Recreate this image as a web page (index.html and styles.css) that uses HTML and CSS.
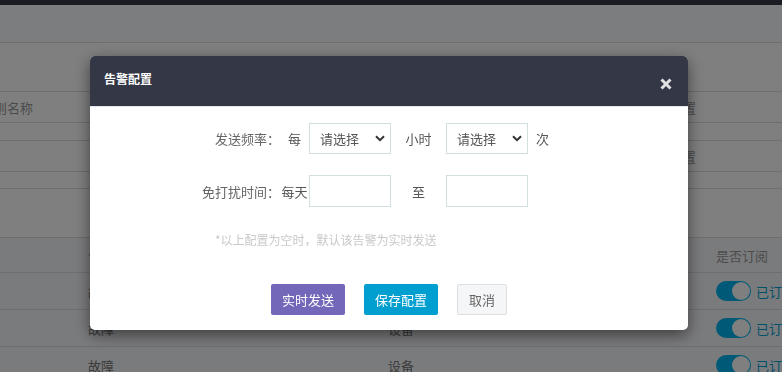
FILE: index.html
```html
<!DOCTYPE html>
<html lang="zh-CN">
<head>
  <meta charset="UTF-8" />
  <title>告警订阅</title>
  <link rel="stylesheet" href="styles.css">
</head>
<body>

  <div class="topbar"></div>
  <div class="toolbar"></div>

  <div class="page">
    <div class="rule-row">
      <span class="rule-name">规则名称</span>
      <span class="rule-link">配置</span>
    </div>
    <div class="rule-row">
      <span class="rule-name"></span>
      <span class="rule-link">配置</span>
    </div>
    <div class="rule-spacer"></div>

    <div class="alarm-table">
      <div class="alarm-head">
        <span>告警类型</span>
        <span>告警对象</span>
        <span>是否订阅</span>
      </div>
      <div class="alarm-row">
        <span>故障</span>
        <span>设备</span>
        <span class="sub"><i class="switch"></i>已订阅</span>
      </div>
      <div class="alarm-row">
        <span>故障</span>
        <span>设备</span>
        <span class="sub"><i class="switch"></i>已订阅</span>
      </div>
      <div class="alarm-row">
        <span>故障</span>
        <span>设备</span>
        <span class="sub"><i class="switch"></i>已订阅</span>
      </div>
    </div>
  </div>

  <div class="overlay">
    <div class="modal">
      <div class="modal-header">
        <h4>告警配置</h4>
        <button class="close" title="关闭">
          <svg width="12" height="12" viewBox="0 0 12 12">
            <path d="M1.5 1.5 L10.5 10.5 M10.5 1.5 L1.5 10.5" stroke="currentColor" stroke-width="3" stroke-linecap="butt"/>
          </svg>
        </button>
      </div>

      <div class="modal-body">
        <div class="form-row">
          <label>发送频率：</label>
          <span class="unit">每</span>
          <div class="select">
            <span>请选择</span>
            <svg width="10" height="7" viewBox="0 0 10 7">
              <path d="M1 1.2 L5 5.2 L9 1.2" fill="none" stroke="#333" stroke-width="2"/>
            </svg>
          </div>
          <span class="mid">小时</span>
          <div class="select">
            <span>请选择</span>
            <svg width="10" height="7" viewBox="0 0 10 7">
              <path d="M1 1.2 L5 5.2 L9 1.2" fill="none" stroke="#333" stroke-width="2"/>
            </svg>
          </div>
          <span class="suffix">次</span>
        </div>

        <div class="form-row">
          <label>免打扰时间：</label>
          <span class="unit">每天</span>
          <input class="field" type="text" />
          <span class="mid">至</span>
          <input class="field" type="text" />
        </div>

        <p class="hint">*以上配置为空时，默认该告警为实时发送</p>
      </div>

      <div class="modal-footer">
        <button class="btn btn-purple">实时发送</button>
        <button class="btn btn-blue">保存配置</button>
        <button class="btn btn-default">取消</button>
      </div>
    </div>
  </div>

</body>
</html>
```

FILE: styles.css
```css
* { box-sizing: border-box; margin: 0; padding: 0; }
html, body { height: 100%; overflow: hidden; }
body {
  font-family: "Noto Sans CJK SC", "Noto Sans", sans-serif;
  font-size: 13px;
  color: #666;
  background: #fff;
}

/* page behind the dialog */
.topbar { height: 5px; background: #343a42; }
.toolbar {
  height: 38px;
  background: #f8fafc;
  border-bottom: 1px solid #d8dee4;
}
.page { padding-top: 48px; }
.rule-row {
  height: 32px;
  border-top: 1px solid #d8dee4;
  border-bottom: 1px solid #d8dee4;
  margin-bottom: 17px;
  display: flex;
  align-items: center;
  justify-content: space-between;
  padding: 0 86px 0 0;
  color: #999;
  white-space: nowrap;
}
.rule-name { margin-left: -19px; }
.rule-spacer {
  height: 49px;
  border-top: 1px solid #d8dee4;
  margin-top: -1px;
}
.alarm-table { background: #f5f6f9; border-top: 1px solid #d8dee4; }
.alarm-head, .alarm-row {
  display: grid;
  grid-template-columns: 300px 328px 1fr;
  padding-left: 88px;
  align-items: center;
  border-bottom: 1px solid #d8dee4;
  white-space: nowrap;
}
.alarm-head { height: 35px; color: #999; }
.alarm-row { height: 37px; color: #777; }
.sub { display: flex; align-items: center; color: #00a0d4; }
.switch {
  width: 35px;
  height: 20px;
  border-radius: 10px;
  background: #00b4ee;
  margin-right: 5px;
  display: flex;
  justify-content: flex-end;
  padding: 1px;
}
.switch::after {
  content: "";
  width: 18px;
  height: 18px;
  border-radius: 50%;
  background: #fff;
}

/* dialog */
.overlay {
  position: fixed;
  inset: 0;
  background: rgba(0, 0, 0, 0.5);
}
.modal {
  width: 598px;
  margin: 56px 0 0 90px;
  background: #fff;
  border-radius: 5px;
  overflow: hidden;
  box-shadow: 0 5px 15px rgba(0, 0, 0, 0.5);
}
.modal-header {
  height: 51px;
  background: #343745;
  border-bottom: 1px solid #e5e5ea;
  display: flex;
  align-items: center;
  justify-content: space-between;
  padding: 0 16px 0 14px;
}
.modal-header h4 {
  font-size: 12px;
  font-weight: 600;
  color: #fff;
  margin-top: -5px;
}
.close {
  background: none;
  border: none;
  color: #e2e2e2;
  display: flex;
  margin-top: 5px;
  cursor: pointer;
}

.modal-body { padding: 16px 0 0 0; }
.form-row {
  display: flex;
  align-items: center;
  height: 31px;
  margin-bottom: 21px;
  color: #555;
}
.form-row + .form-row { height: 32px; margin-bottom: 22px; }
.form-row label {
  width: 190px;
  text-align: right;
  color: #666;
}
.unit { width: 29px; text-align: center; }
.mid { width: 55px; text-align: center; }
.suffix { margin-left: 8px; }
.select, .field {
  width: 82px;
  height: 100%;
  border: 1px solid #d2dfe0;
  background: #fff;
}
.select {
  display: flex;
  align-items: center;
  justify-content: space-between;
  padding: 0 5px 0 10px;
  color: #555;
}
.field { outline: none; }
.hint {
  margin: 0 0 0 125px;
  padding-top: 3px;
  font-size: 12px;
  color: #c9c9c9;
  line-height: 16px;
}

.modal-footer {
  display: flex;
  justify-content: center;
  gap: 19px;
  padding: 36px 0 15px 0;
}
.btn {
  height: 31px;
  padding: 0;
  border: none;
  border-radius: 2px;
  font-family: inherit;
  font-size: 13px;
  color: #fff;
  white-space: nowrap;
  cursor: pointer;
}
.btn-purple { background: #7367b9; width: 74px; }
.btn-blue { background: #009fd0; width: 74px; }
.btn-default {
  background: #f5f6f7;
  border: 1px solid #dcdfe2;
  color: #666;
  width: 50px;
}
```
